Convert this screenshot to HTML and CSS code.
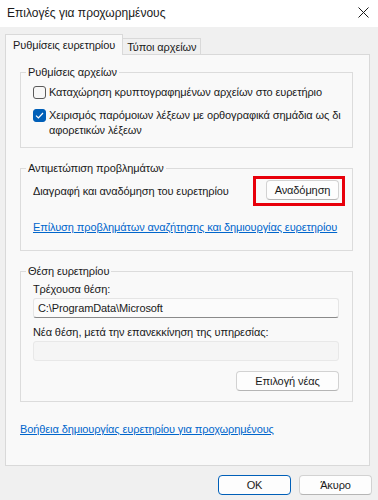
FILE: index.html
```html
<!DOCTYPE html>
<html lang="el">
<head>
    <meta charset="UTF-8">
    <meta name="viewport" content="width=device-width, initial-scale=1.0">
    <title>Επιλογές για προχωρημένους</title>
    <link rel="stylesheet" href="styles.css">
</head>
<body>
    <div class="window">
        <div class="titlebar">
            <span class="title">Επιλογές για προχωρημένους</span>
            <svg class="close" width="11" height="11" viewBox="0 0 11 11">
                <path d="M0.5 0.5 L10.5 10.5 M10.5 0.5 L0.5 10.5" stroke="#1a1a1a" stroke-width="1"/>
            </svg>
        </div>

        <div class="tabs">
            <div class="tab active">Ρυθμίσεις ευρετηρίου</div>
            <div class="tab">Τύποι αρχείων</div>
        </div>

        <div class="panel">
            <!-- File settings -->
            <fieldset class="group files">
                <legend>Ρυθμίσεις αρχείων</legend>
                <div class="group-body">
                    <label class="check">
                        <span class="box"></span>
                        <span>Καταχώρηση κρυπτογραφημένων αρχείων στο ευρετήριο</span>
                    </label>
                    <label class="check">
                        <span class="box checked">
                            <svg width="9" height="7" viewBox="0 0 9 7">
                                <path d="M1 3.6 L3.4 6 L8 1" fill="none" stroke="#fff" stroke-width="1.2"/>
                            </svg>
                        </span>
                        <span>Χειρισμός παρόμοιων λέξεων με ορθογραφικά σημάδια ως δι<br>αφορετικών λέξεων</span>
                    </label>
                </div>
            </fieldset>

            <!-- Troubleshooting -->
            <fieldset class="group trouble">
                <legend>Αντιμετώπιση προβλημάτων</legend>
                <div class="group-body">
                    <div class="rebuild-row">
                        <span>Διαγραφή και αναδόμηση του ευρετηρίου</span>
                        <div class="highlight">
                            <button class="btn">Αναδόμηση</button>
                        </div>
                    </div>
                    <a class="link trouble-link" href="#">Επίλυση προβλημάτων αναζήτησης και δημιουργίας ευρετηρίου</a>
                </div>
            </fieldset>

            <!-- Index location -->
            <fieldset class="group location">
                <legend>Θέση ευρετηρίου</legend>
                <div class="group-body">
                    <div class="field-label">Τρέχουσα θέση:</div>
                    <div class="textbox">C:\ProgramData\Microsoft</div>
                    <div class="field-label second">Νέα θέση, μετά την επανεκκίνηση της υπηρεσίας:</div>
                    <div class="textbox disabled"></div>
                    <div class="actions">
                        <button class="btn">Επιλογή νέας</button>
                    </div>
                </div>
            </fieldset>

            <a class="link help-link" href="#">Βοήθεια δημιουργίας ευρετηρίου για προχωρημένους</a>
        </div>

        <div class="footer">
            <button class="btn default">OK</button>
            <button class="btn">Άκυρο</button>
        </div>
    </div>
</body>
</html>
```

FILE: styles.css
```css
* {
    margin: 0;
    padding: 0;
    box-sizing: border-box;
}

body {
    font-family: 'Liberation Sans', 'Noto Sans', sans-serif;
    font-size: 11px;
    letter-spacing: -0.1px;
    color: #1a1a1a;
    background: #f0f0f0;
    white-space: nowrap;
}

.window {
    width: 378px;
    height: 500px;
    overflow: hidden;
}

.titlebar {
    height: 27px;
    background: #ffffff;
    display: flex;
    align-items: center;
    justify-content: space-between;
    padding: 0 9px 2px 7px;
}

.title {
    font-size: 12px;
    letter-spacing: 0;
}

/* Tabs */
.tabs {
    display: flex;
    align-items: flex-end;
    height: 27px;
    padding-left: 5px;
}

.tab {
    height: 16px;
    line-height: 16px;
    padding: 0 4px 0 4px;
    border: 1px solid #d9d9d9;
    border-bottom: none;
    border-left: none;
    background: #f0f0f0;
}

.tab.active {
    height: 21px;
    line-height: 20px;
    padding: 0 7px;
    border-left: 1px solid #d9d9d9;
    background: #f9f9f9;
    position: relative;
    top: 1px;
    margin-top: -1px;
}

.panel {
    height: 412px;
    margin: 0 8px 0 5px;
    padding: 9px 16px 0 14px;
    background: #f9f9f9;
    border: 1px solid #d9d9d9;
}

/* Group boxes */
.group {
    min-width: 0;
    border: 1px solid #dcdcdc;
    padding: 0 13px 0 5px;
}

.group + .group {
    margin-top: 12px;
}

.group legend {
    line-height: 16px;
    padding: 0 2px;
}

.group-body {
    padding-left: 7px;
}

.files .group-body {
    padding-top: 5px;
    padding-bottom: 9px;
}

.check {
    display: flex;
    align-items: flex-start;
    line-height: 15px;
}

.check + .check {
    margin-top: 8px;
}

.box {
    flex: none;
    width: 13px;
    height: 13px;
    margin: 1px 3px 0 0;
    border: 1px solid #5a5a5a;
    border-radius: 3px;
    background: #f7f7f7;
    display: flex;
    align-items: center;
    justify-content: center;
}

.box.checked {
    background: #005fb8;
    border-color: #005fb8;
}

.rebuild-row {
    display: flex;
    align-items: center;
    justify-content: space-between;
    margin-right: -6px;
}

.highlight {
    border: 3px solid #e8000b;
    padding: 1px 3px 3px 10px;
}

.link {
    color: #0066cc;
    text-decoration: underline;
    line-height: 15px;
}

.trouble-link {
    display: inline-block;
    margin-top: 14px;
    margin-bottom: 15px;
}

.help-link {
    display: inline-block;
    margin-top: 20px;
}

.field-label {
    line-height: 15px;
    margin-top: 3px;
}

.field-label.second {
    margin-top: 7px;
}

.textbox {
    height: 20px;
    line-height: 18px;
    margin-top: 1px;
    padding: 0 4px;
    background: #fbfbfb;
    border: 1px solid #e5e5e5;
    border-bottom-color: #8a8a8a;
    border-radius: 3px;
}

.textbox.disabled {
    background: #f5f5f5;
    border-color: #e8e8e8;
}

.actions {
    display: flex;
    justify-content: flex-end;
    margin-top: 10px;
    padding-bottom: 10px;
}

/* Buttons */
.btn {
    font-family: inherit;
    font-size: 11px;
    letter-spacing: -0.1px;
    color: #1a1a1a;
    width: 73px;
    height: 20px;
    background: #fdfdfd;
    border: 1px solid #d2d2d2;
    border-bottom-color: #b5b5b5;
    border-radius: 4px;
}

.actions .btn {
    width: 103px;
}

.btn.default {
    border: 1px solid #005fb8;
}

.footer {
    display: flex;
    justify-content: flex-end;
    gap: 8px;
    padding: 9px 6px 0 0;
}
```
